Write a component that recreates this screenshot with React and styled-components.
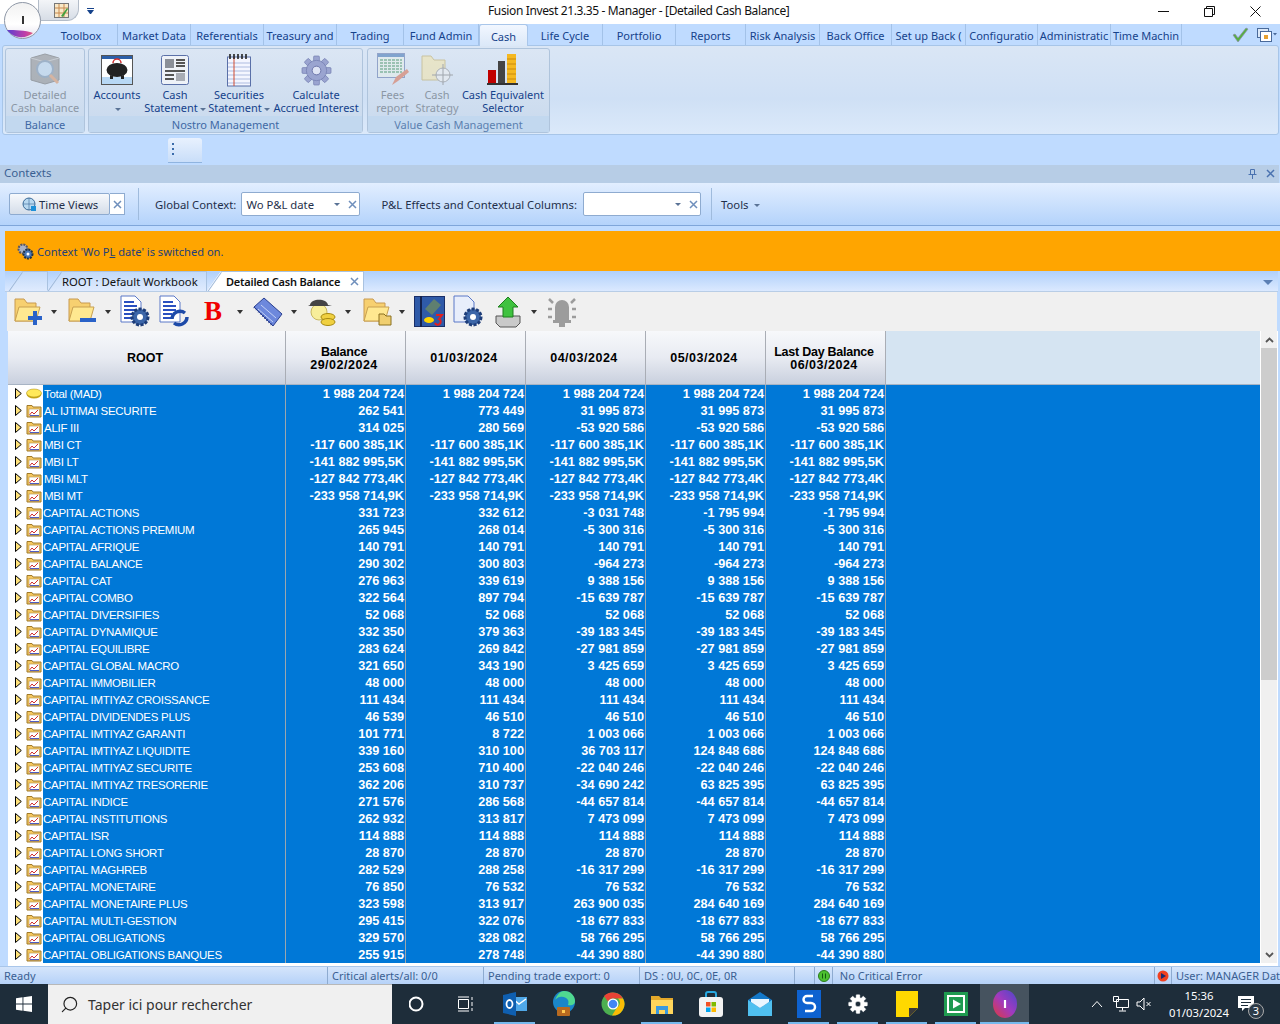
import styled, { createGlobalStyle } from 'styled-components';
import { Search } from 'lucide-react';

const GlobalStyle = createGlobalStyle`
    html, body { margin: 0; padding: 0; background: #bfdbff; }
    * { box-sizing: border-box; }
`;

const uiFont = `"Noto Sans", "DejaVu Sans", sans-serif`;
const gridFont = `"Liberation Sans", Arial, sans-serif`;

const Page = styled.div`
    position: relative;
    width: 1280px;
    height: 1024px;
    overflow: hidden;
    display: flex;
    flex-direction: column;
    background: #bfdbff;
    font-family: ${uiFont};
    font-size: 11px;
    color: #15428b;
`;

/* title bar */
const TitleBar = styled.div`
    height: 24px;
    flex: none;
    background: #fff;
    display: flex;
    align-items: center;
    color: #111;
    font-size: 12px;
    letter-spacing: -0.37px;
    padding: 0 0 3px 488px;
    white-space: nowrap;
`;
const WindowButtons = styled.div`
    position: absolute;
    top: 0;
    right: 2px;
    height: 23px;
    display: flex;
    align-items: center;
`;
const WinBtn = styled.div`
    width: 46px;
    height: 23px;
    display: flex;
    align-items: center;
    justify-content: center;
`;
const Orb = styled.div`
    position: absolute;
    left: 4px;
    top: 2px;
    width: 37px;
    height: 37px;
    z-index: 3;
`;
const QuickPill = styled.div`
    position: absolute;
    left: 38px;
    top: 0;
    width: 41px;
    height: 21px;
    border: 1px solid #b3bcc8;
    border-top: 0;
    border-radius: 0 0 12px 0;
    background: linear-gradient(to bottom, #f3f5f8, #d7dde6);
    display: flex;
    align-items: center;
    justify-content: center;
    padding-left: 6px;
`;
const QuickMenu = styled.div`
    position: absolute;
    left: 87px;
    top: 8px;
    width: 7px;
    height: 6px;
    border-top: 1px solid #15428b;
    &::after {
        content: '';
        display: block;
        margin-top: 1px;
        border: 3px solid transparent;
        border-top: 4px solid #15428b;
        border-bottom: 0;
    }
`;

/* ribbon tabs */
const TabRow = styled.div`
    height: 21px;
    flex: none;
    display: flex;
    padding-left: 45px;
    position: relative;
`;
const RibbonTab = styled.div`
    width: ${p => p.$w}px;
    height: ${p => (p.$active ? 22 : 21)}px;
    overflow: hidden;
    white-space: nowrap;
    display: flex;
    align-items: center;
    justify-content: center;
    padding-top: 1px;
    color: #15428b;
    z-index: 1;
    border-right: 1px solid ${p => (p.$active ? 'transparent' : '#a3c2e8')};
    ${p => p.$active && `
        background: linear-gradient(to bottom, #f2f7ff, #dbe8f8);
        border: 1px solid #a9c6ea;
        border-bottom: 0;
        border-radius: 3px 3px 0 0;
    `}
`;
const TabIcons = styled.div`
    position: absolute;
    right: 3px;
    top: 1px;
    height: 20px;
    display: flex;
    align-items: center;
    gap: 8px;
`;

/* ribbon */
const Ribbon = styled.div`
    height: 90px;
    flex: none;
    margin: 0 1px 0 2px;
    padding: 2px 0 1px 2px;
    background: linear-gradient(to bottom, #dae6f5, #cfe0f5 60%, #dbe9fa);
    border: 1px solid #a7c5e8;
    border-radius: 3px;
    display: flex;
    gap: 3px;
`;
const Group = styled.div`
    width: ${p => p.$w}px;
    margin-left: ${p => p.$ml || 0}px;
    border: 1px solid #afc4dc;
    border-radius: 3px;
    background: linear-gradient(to bottom, #dbe6f4, #c8d9ed);
    display: flex;
    flex-direction: column;
`;
const GroupBody = styled.div`
    flex: 1;
    display: flex;
    min-height: 0;
`;
const GroupLabel = styled.div`
    height: 16px;
    flex: none;
    background: #c2d8ef;
    text-align: center;
    line-height: 17px;
    color: ${p => (p.$off ? '#5b7faf' : '#3f69a5')};
`;
const RibbonBtn = styled.div`
    width: ${p => p.$w}px;
    flex: none;
    display: flex;
    flex-direction: column;
    align-items: center;
    padding-top: 3px;
    text-align: center;
    line-height: 13px;
    white-space: nowrap;
    color: ${p => (p.$off ? '#8b97a5' : '#15428b')};
`;
const RibbonIcon = styled.div`
    height: 36px;
    display: flex;
    align-items: center;
    justify-content: center;
    opacity: ${p => (p.$off ? 0.55 : 1)};
`;
const Caret = styled.span`
    display: inline-block;
    margin-left: ${p => p.$ml ?? 2}px;
    margin-right: ${p => p.$mr ?? 0}px;
    vertical-align: middle;
    border: 3px solid transparent;
    border-top: 3px solid #5a7396;
    border-bottom: 0;
`;

const SubBar = styled.div`
    height: 30px;
    flex: none;
    padding: 3px 0 0 168px;
`;
const SubBarHandle = styled.div`
    width: 34px;
    height: 25px;
    border-radius: 3px 3px 0 0;
    border-bottom: 1px solid #8fb4e0;
    background: linear-gradient(to bottom, #e8f1fe, #c9def9);
    padding: 5px 0 0 4px;
`;

/* contexts */
const ContextHead = styled.div`
    height: 18px;
    flex: none;
    margin-right: 1px;
    background: #b7cde6;
    display: flex;
    align-items: center;
    justify-content: space-between;
    padding: 0 4px 3px;
    color: #3a5f92;
    font-size: 11.5px;
`;
const HeadIcons = styled.div`
    display: flex;
    align-items: center;
    gap: 9px;
    margin-top: 2px;
`;
const ContextBar = styled.div`
    height: 43px;
    flex: none;
    background: linear-gradient(to bottom, #e2eeff, #b4d3fb);
    border-bottom: 1px solid #7fa6da;
    display: flex;
    align-items: center;
    padding-left: 9px;
    color: #1f2f4a;
    font-size: 11.3px;
`;
const TimeBtn = styled.div`
    width: 101px;
    height: 22px;
    border: 1px solid #8eabd0;
    border-radius: 2px;
    background: linear-gradient(to bottom, #f7f9fc, #d4dde9);
    display: flex;
    align-items: center;
    padding-left: 12px;
    gap: 2px;
`;
const CloseBox = styled.div`
    width: 15px;
    height: 22px;
    background: #fff;
    border: 1px solid #8eabd0;
    border-left: 0;
    display: flex;
    align-items: center;
    justify-content: center;
`;
const VSep = styled.div`
    width: 1px;
    height: 32px;
    background: #9fbbdd;
    margin: ${p => p.$m};
`;
const Combo = styled.div`
    width: ${p => p.$w}px;
    height: 24px;
    margin-left: ${p => p.$ml}px;
    background: #fff;
    border: 1px solid #8eabd0;
    border-radius: 2px;
    display: flex;
    align-items: center;
    padding: 0 2px 0 4px;
`;
const ComboText = styled.div`
    flex: 1;
`;
const BarLabel = styled.div`
    white-space: nowrap;
    margin-left: ${p => p.$ml || 0}px;
`;

/* content */
const Content = styled.div`
    flex: 1;
    min-height: 0;
    margin-top: 5px;
    padding: 0 0 0 5px;
    display: flex;
    flex-direction: column;
`;
const Alert = styled.div`
    height: 40px;
    flex: none;
    background: #ffa500;
    display: flex;
    align-items: center;
    padding: 0 0 0 12px;
    gap: 3px;
    color: #23407a;
    font-size: 11.1px;
`;
const DocTabs = styled.div`
    height: 21px;
    flex: none;
    margin-right: 2px;
    background: linear-gradient(to bottom, #b0d0fa, #dbe9ff);
    border-bottom: 1px solid #b8cde6;
    display: flex;
    align-items: flex-end;
    position: relative;
    padding-left: 3px;
`;
const DocTab = styled.div`
    position: relative;
    width: ${p => p.$w}px;
    height: 20px;
    padding-left: ${p => p.$pl}px;
    display: flex;
    align-items: center;
    gap: 10px;
    color: #111;
    white-space: nowrap;
    background: ${p => (p.$active ? '#fff' : 'linear-gradient(to bottom, #c3daf9, #dfebfe)')};
    border-top: 1px solid #a9c2e0;
    border-right: 1px solid #a9c2e0;
    font-weight: ${p => (p.$active ? 600 : 400)};
    font-size: ${p => (p.$active ? 11 : 11.3)}px;
    letter-spacing: ${p => (p.$active ? -0.22 : 0)}px;
    clip-path: polygon(0 100%, 14px 0, 100% 0, 100% 100%);
    margin-right: ${p => p.$mr || 0}px;
    &::before {
        content: '';
        position: absolute;
        left: 7px;
        top: -2px;
        width: 1px;
        height: 24px;
        background: #9fb9da;
        transform: rotate(35deg);
    }
`;
const TabMenu = styled.div`
    position: absolute;
    right: 5px;
    top: 9px;
    border: 5px solid transparent;
    border-top: 5px solid #5b7fb4;
    border-bottom: 0;
`;
const Toolbar = styled.div`
    height: 39px;
    flex: none;
    margin-left: 2px;
    margin-right: 3px;
    background: #f0f0f0;
    display: flex;
    align-items: center;
    padding-left: 7px;
`;
const ToolSlot = styled.div`
    width: ${p => p.$w}px;
    height: 33px;
    flex: none;
    margin-left: ${p => p.$ml || 0}px;
    display: flex;
    align-items: center;
    justify-content: center;
`;
const BoldGlyph = styled.span`
    font-family: "Liberation Serif", "Times New Roman", serif;
    font-weight: 700;
    font-size: 27px;
    line-height: 27px;
    color: #f00000;
`;
const ToolArrow = styled.div`
    width: 8px;
    flex: none;
    margin-left: ${p => p.$ml || 0}px;
    display: flex;
    justify-content: center;
    &::after {
        content: '';
        border: 3.5px solid transparent;
        border-top: 4px solid #333;
        border-bottom: 0;
    }
`;

const GridWrap = styled.div`
    flex: 1;
    min-height: 0;
    margin-left: 3px;
    margin-right: 2px;
    display: flex;
    background: #fff;
    border-bottom: 3px solid #fff;
`;
const GridMain = styled.div`
    width: 1252px;
    flex: none;
    overflow: hidden;
`;
const columns = '278px repeat(5, 120px) 1fr';
const HeadRow = styled.div`
    height: 54px;
    display: grid;
    grid-template-columns: ${columns};
    background: #d5e4f2;
    border-bottom: 1px solid #a8b4c4;
`;
const HeadCell = styled.div`
    background: linear-gradient(to bottom, #f7f8fb, #e8ebf2 50%, #c9d0de);
    border-right: 1px solid #a9adb5;
    display: flex;
    flex-direction: column;
    align-items: center;
    justify-content: center;
    text-align: center;
    padding: 2px 3px 0 0;
    font-family: ${gridFont};
    font-weight: 700;
    font-size: 12.5px;
    line-height: 13px;
    color: #000;
`;
const HeadLabel = styled.div`
    letter-spacing: -0.25px;
`;
const HeadDate = styled.div`
    letter-spacing: 0.5px;
`;
const HeadFill = styled.div`
    background: #d5e4f2;
`;
const Row = styled.div`
    height: 17px;
    display: grid;
    grid-template-columns: ${columns};
    font-family: ${gridFont};
    color: #fff;
`;
const NameCell = styled.div`
    display: flex;
    align-items: stretch;
    border-right: 1px solid #9aa6ae;
`;
const TreePart = styled.div`
    width: 35px;
    flex: none;
    background: #fff;
    display: flex;
    align-items: center;
    padding-left: 7px;
    gap: 4px;
`;
const NameText = styled.div`
    flex: 1;
    background: #0078d7;
    font-size: 11.5px;
    letter-spacing: -0.28px;
    line-height: 16px;
    padding: 1px 0 0 ${p => (p.$first ? 1 : 0)}px;
    white-space: nowrap;
    overflow: hidden;
`;
const ValueCell = styled.div`
    background: #0078d7;
    border-right: 1px solid #9aa6ae;
    text-align: right;
    line-height: 16px;
    padding: 1px 1px 0 0;
    font-weight: 700;
    font-size: 12.7px;
    white-space: nowrap;
`;
const RowFill = styled.div`
    background: #0078d7;
`;
const ScrollBar = styled.div`
    width: 16px;
    margin-left: 1px;
    flex: none;
    display: flex;
    flex-direction: column;
    background: #f0f0f0;
`;
const ScrollEnd = styled.div`
    height: 17px;
    flex: none;
    display: flex;
    align-items: center;
    justify-content: center;
`;
const ScrollThumb = styled.div`
    height: 332px;
    flex: none;
    background: #cdcdcd;
`;
const ScrollRest = styled.div`
    flex: 1;
`;

/* status bar */
const StatusBar = styled.div`
    height: 18px;
    flex: none;
    background: linear-gradient(to bottom, #d5e5fb, #b6d2f8);
    border-top: 1px solid #a9c6ea;
    display: flex;
    color: #3a5f92;
    overflow: hidden;
`;
const StatusCell = styled.div`
    width: ${p => p.$w}px;
    flex: none;
    padding-left: ${p => (p.$icon ? 0 : 4)}px;
    border-right: 1px solid #8eabd0;
    white-space: nowrap;
    line-height: 17px;
    display: flex;
    align-items: center;
    justify-content: ${p => (p.$icon ? 'center' : 'flex-start')};
    &:last-child { border-right: 0; }
`;

/* taskbar */
const Taskbar = styled.div`
    height: 40px;
    flex: none;
    background: #1e2d3a;
    display: flex;
    align-items: stretch;
    color: #fff;
`;
const StartBtn = styled.div`
    width: 48px;
    flex: none;
    display: flex;
    align-items: center;
    justify-content: center;
`;
const SearchBox = styled.div`
    width: 344px;
    flex: none;
    background: #f0f0f0;
    border-top: 1px solid #b8b8b8;
    color: #333;
    display: flex;
    align-items: center;
    padding-left: 12px;
    gap: 9px;
    font-size: 14px;
`;
const TaskIcons = styled.div`
    display: flex;
`;
const TaskItem = styled.div`
    width: 49px;
    height: 40px;
    flex: none;
    display: flex;
    align-items: center;
    justify-content: center;
    position: relative;
    background: ${p => (p.$active ? '#46535f' : 'transparent')};
    &::after {
        content: '';
        display: ${p => (p.$open ? 'block' : 'none')};
        position: absolute;
        left: ${p => (p.$active ? 0 : 4)}px;
        right: ${p => (p.$active ? 0 : 4)}px;
        bottom: 0;
        height: 2px;
        background: #76b9ed;
    }
`;
const Tray = styled.div`
    flex: 1;
    display: flex;
    align-items: center;
    padding-left: 56px;
`;
const TrayIcon = styled.div`
    width: ${p => p.$w}px;
    flex: none;
    display: flex;
    justify-content: center;
`;
const Clock = styled.div`
    width: 68px;
    margin-left: 10px;
    text-align: center;
    font-size: 11.3px;
    line-height: 17px;
`;
const Notif = styled.div`
    position: relative;
    margin-left: 4px;
    width: 26px;
    height: 24px;
`;
const NotifCount = styled.div`
    position: absolute;
    right: -1px;
    bottom: -3px;
    width: 16px;
    height: 16px;
    border-radius: 50%;
    background: #2c3a47;
    border: 1px solid #aaa;
    font-size: 11px;
    line-height: 14px;
    text-align: center;
`;

/* drawn icons */
const Expander = () => (
    <svg width="7" height="11" viewBox="0 0 7 11" style={{ flex: 'none' }}>
        <path d="M.5.5 6.300 5.500.5 10.500Z" fill="#ffe27a" stroke="#000" />
    </svg>
);
const TreeFolder = () => (
    <svg width="16" height="14" viewBox="0 0 16 14" style={{ flex: 'none' }}>
        <path d="M1 3V1.500h5L7 3h8v10H1Z" fill="#f5c860" stroke="#a07a2a" />
        <rect x="3" y="5" width="10.500" height="7" fill="#fff" stroke="#b08a40" strokeWidth=".6" />
        <path d="M3.500 11 6 8l2 2 4-4" fill="none" stroke="#d03030" />
        <path d="M4 11.600h9" stroke="#4050c0" />
    </svg>
);
const Coin = () => (
    <svg width="16" height="11" viewBox="0 0 16 11" style={{ flex: 'none' }}>
        <ellipse cx="8" cy="6" rx="7.500" ry="4.500" fill="#c8a818" />
        <ellipse cx="8" cy="5" rx="7.500" ry="4" fill="#ffe95a" stroke="#a88a10" strokeWidth=".5" />
    </svg>
);
const SmallX = ({ c = '#6f8fbc', s = 9 }) => (
    <svg width={s} height={s} viewBox="0 0 9 9" style={{ flex: 'none' }}>
        <path d="M1 1l7 7M8 1 1 8" stroke={c} strokeWidth="1.500" />
    </svg>
);
const GearShape = ({ s = 32, fill = '#9aa4d0', hole = '#dfe4f5', stroke = '#6a74a8' }) => {
    const teeth = [0, 45, 90, 135, 180, 225, 270, 315];
    return (
        <svg width={s} height={s} viewBox="0 0 32 32" style={{ flex: 'none' }}>
            {teeth.map(a => (
                <rect key={a} x="13" y="1" width="6" height="7" rx="1" fill={fill} stroke={stroke} strokeWidth=".6" transform={`rotate(${a} 16 16)`} />
            ))}
            <circle cx="16" cy="16" r="10.500" fill={fill} stroke={stroke} strokeWidth=".6" />
            <circle cx="16" cy="16" r="4.500" fill={hole} stroke={stroke} />
        </svg>
    );
};
const OrbLogo = () => (
    <svg width="37" height="37" viewBox="0 0 37 37">
        <defs>
            <linearGradient id="orbFace" x1="0" y1="0" x2="0" y2="1">
                <stop offset="0" stopColor="#f1f1f1" />
                <stop offset=".6" stopColor="#ffffff" />
                <stop offset="1" stopColor="#e6e2ee" />
            </linearGradient>
            <linearGradient id="orbBand" x1="0" y1="0" x2="1" y2="0">
                <stop offset="0" stopColor="#5a3fd0" />
                <stop offset=".7" stopColor="#c03fa8" />
                <stop offset="1" stopColor="#e05a7a" />
            </linearGradient>
        </defs>
        <circle cx="18.500" cy="18.500" r="18" fill="url(#orbFace)" stroke="#8e97a6" />
        <path d="M3 28c8 0 18 0 26 3-7 6-19 6-26-3Z" fill="url(#orbBand)" />
        <rect x="18" y="14" width="2" height="8" fill="#333" />
    </svg>
);
const SafeIcon = () => (
    <svg width="32" height="34" viewBox="0 0 32 34">
        <path d="M2 5 16 1l14 4v22l-14 4L2 27Z" fill="#8b8b8b" stroke="#666" />
        <path d="M2 5l14 4 14-4" fill="none" stroke="#bbb" />
        <circle cx="16" cy="16" r="8" fill="#b9d3ea" stroke="#6f8aa6" strokeWidth="2" />
        <path d="m21 22 8 8" stroke="#d89060" strokeWidth="3" />
    </svg>
);
const PiggyIcon = () => (
    <svg width="32" height="30" viewBox="0 0 32 30">
        <rect x=".5" y=".5" width="31" height="29" fill="#fff" stroke="#555" />
        <rect x="1" y="1" width="30" height="3" fill="#2c5fa8" />
        <path d="M1 22h30v7H1Z" fill="#b8d8f5" />
        <ellipse cx="16" cy="15" rx="10.500" ry="7" fill="#222" />
        <path d="M9 20v4h3v-3M20 21v3h3v-4" fill="#222" />
        <path d="M12 8a4 4 0 0 1 8 0" fill="none" stroke="#d03030" strokeWidth="1.500" />
    </svg>
);
const TableIcon = () => (
    <svg width="28" height="30" viewBox="0 0 28 30">
        <rect x=".5" y=".5" width="27" height="29" rx="2" fill="#eef2f8" stroke="#5a70a8" />
        <rect x="4" y="4" width="9" height="9" fill="#8a8f98" />
        <path d="M15 5h9M15 8h9M15 11h9M4 16h20M4 20h9M4 24h9" stroke="#555" strokeWidth="2" />
        <rect x="15" y="18" width="9" height="8" fill="#a9adb5" />
    </svg>
);
const NotebookIcon = () => (
    <svg width="24" height="33" viewBox="0 0 24 33">
        <rect x=".5" y="3" width="23" height="29" fill="#f4f6ff" stroke="#5a70a8" />
        <path d="M1 9h22M1 13h22M1 17h22M1 21h22M1 25h22M1 29h22" stroke="#aebce0" />
        <path d="M7 3v29" stroke="#d04a30" />
        <path d="M3 0v5M7 0v5M11 0v5M15 0v5M19 0v5" stroke="#222" strokeWidth="1.600" />
    </svg>
);
const CalendarPen = () => (
    <svg width="32" height="34" viewBox="0 0 32 34">
        <rect x=".5" y=".5" width="27" height="24" fill="#e7efe9" stroke="#5a70a8" />
        <rect x="1" y="1" width="26" height="3" fill="#3a6fb0" />
        <path d="M3 7h22M3 10h22M3 13h22M3 16h22M3 19h22" stroke="#6aa880" strokeWidth="2" strokeDasharray="3 1" />
        <path d="m15 32 4-8 11-8 2 3-11 9Z" fill="#d86a4a" />
    </svg>
);
const FolderTarget = () => (
    <svg width="32" height="30" viewBox="0 0 32 30">
        <path d="M1 5V1h9l3 4h11v20H1Z" fill="#f4e4a8" stroke="#bca860" />
        <circle cx="22" cy="20" r="7" fill="#eee" stroke="#888" />
        <path d="M22 9v22M11 20h21" stroke="#777" />
    </svg>
);
const BarsIcon = () => (
    <svg width="32" height="32" viewBox="0 0 32 32">
        <rect x="1" y="16" width="8" height="13" fill="#c00000" />
        <rect x="11" y="7" width="7" height="22" fill="#444" />
        <path d="M20 0h9v29h-9Z" fill="#f5b820" />
        <path d="M20 5h9M20 10h9M20 15h9M20 20h9M20 25h9" stroke="#c98a10" />
        <path d="M0 30h31" stroke="#333" strokeWidth="2" />
    </svg>
);
const FolderTool = ({ badge }) => (
    <svg width="30" height="32" viewBox="0 0 30 32">
        <path d="M1 7V3h9l3 4h9v18H1Z" fill="#f7d070" stroke="#c89a50" />
        <path d="M1 25 5 11h21l-4 14Z" fill="#ffe890" stroke="#c8a050" />
        {badge === 'plus' && <path d="M21 15v14M14 22h14" stroke="#2a62c8" strokeWidth="4" />}
        {badge === 'minus' && <path d="M12 24h16" stroke="#2a62c8" strokeWidth="4" />}
        {badge === 'folder' && <path d="M16 21v-3h5l2 2h5v9H16Z" fill="#f0cf70" stroke="#8a7020" />}
    </svg>
);
const DocGear = ({ refresh, pale }) => (
    <svg width="32" height="33" viewBox="0 0 32 33">
        <path d="M2 1h14l6 6v20H2Z" fill={pale ? '#e8eefb' : '#fff'} stroke="#5a78c8" />
        {!pale && <path d="M5 7h10M5 11h13M5 15h13M5 19h9M5 23h9" stroke="#2a50c0" strokeWidth="2" />}
        {refresh ? (
            <g fill="none" stroke="#1d4aa8" strokeWidth="3.500">
                <path d="M14 24a8 8 0 0 1 13-6" />
                <path d="M29 22a8 8 0 0 1-13 6" />
            </g>
        ) : (
            <g>
                <circle cx="21" cy="22" r="8" fill="#3c66a8" stroke="#1d3c78" strokeDasharray="3 1.500" strokeWidth="3" />
                <circle cx="21" cy="22" r="3" fill="#fff" />
            </g>
        )}
    </svg>
);
const BookIcon = () => (
    <svg width="30" height="30" viewBox="0 0 30 30">
        <path d="M1 10 11 1l18 16-9 12Z" fill="#6d88dc" stroke="#2a3f90" />
        <path d="m5 12 15 13M8 8l15 13" stroke="#c5d2f5" />
        <path d="m1 10 19 19" stroke="#2a3f90" strokeWidth="2" strokeDasharray="1 2" />
    </svg>
);
const ManCoins = () => (
    <svg width="30" height="32" viewBox="0 0 30 32">
        <circle cx="12" cy="16" r="8" fill="#f8ee9a" stroke="#c8b860" />
        <path d="M3 9c1-7 17-7 18 0l4 1H1Z" fill="#444" />
        <ellipse cx="21" cy="21" rx="7" ry="3.500" fill="#f0d040" stroke="#a88a10" />
        <ellipse cx="21" cy="26" rx="7" ry="3.500" fill="#f0d040" stroke="#a88a10" />
    </svg>
);
const BlueBook = () => (
    <svg width="31" height="31" viewBox="0 0 31 31">
        <rect x=".5" y=".5" width="30" height="30" fill="#2f5aa8" stroke="#1a2f68" />
        <path d="M7 0v31" stroke="#14224d" strokeWidth="2" />
        <path d="m11 13 9-10 7 6-9 10Z" fill="#5f7f70" />
        <ellipse cx="15" cy="24" rx="5" ry="3" fill="#ffd400" />
        <path d="M22 19h6l-3 4a3 3 0 1 1-4 4" fill="none" stroke="#e02020" strokeWidth="2" />
    </svg>
);
const UploadIcon = () => (
    <svg width="28" height="32" viewBox="0 0 28 32">
        <path d="M2 20h24v7l-4 4H6l-4-4Z" fill="#c9c9c9" stroke="#555" />
        <path d="M14 1 24 11h-5v10H9V11H4Z" fill="#3fc23f" stroke="#1f7f1f" />
    </svg>
);
const BellIcon = () => (
    <svg width="32" height="32" viewBox="0 0 32 32">
        <path d="M9 24V11a7 7 0 0 1 14 0v13Z" fill="#9c9c9c" />
        <rect x="7" y="24" width="18" height="3" fill="#9c9c9c" />
        <rect x="13" y="27" width="6" height="4" fill="#9c9c9c" />
        <path d="M3 3l4 4M29 3l-4 4M2 13h4M26 13h4M2 21h4M26 21h4" stroke="#9c9c9c" strokeWidth="2.500" />
    </svg>
);
const GearsSmall = () => (
    <svg width="17" height="17" viewBox="0 0 17 17">
        <circle cx="6" cy="6" r="4.500" fill="#aab2c4" stroke="#556" strokeDasharray="2 1" strokeWidth="2" />
        <circle cx="11" cy="11" r="4.500" fill="#4a78b8" stroke="#234" strokeDasharray="2 1" strokeWidth="2" />
        <circle cx="11" cy="11" r="1.500" fill="#fff" />
    </svg>
);
const ClockGlobe = () => (
    <svg width="15" height="15" viewBox="0 0 15 15">
        <circle cx="7" cy="7" r="6" fill="#b8d8f0" stroke="#3a6a98" />
        <path d="M1 7h12M7 1v12" stroke="#3a6a98" strokeWidth=".6" />
        <path d="M9 9h5v5H9Z" fill="#1e90d8" />
    </svg>
);
const Windows = () => (
    <svg width="16" height="16" viewBox="0 0 16 16" fill="#fff">
        <path d="M0 2.200 6.500 1.300V7.500H0ZM7.400 1.200 16 0v7.500H7.400ZM0 8.400h6.500v6.300L0 13.800ZM7.400 8.400H16V16l-8.600-1.200Z" />
    </svg>
);
const Outlook = () => (
    <svg width="24" height="26" viewBox="0 0 24 26">
        <path d="M9 6h15v14H9Z" fill="#50a8e8" />
        <path d="m10 8 6 5 7-5" fill="none" stroke="#fff" strokeWidth="1.500" />
        <path d="M0 4 13 1v24L0 22Z" fill="#0f5fb0" />
        <ellipse cx="6.500" cy="13" rx="3" ry="4" fill="none" stroke="#fff" strokeWidth="1.800" />
    </svg>
);
const Edge = () => (
    <svg width="26" height="28" viewBox="0 0 26 28">
        <circle cx="13" cy="12" r="11" fill="#1b86c8" />
        <path d="M13 1c7 0 11 5 11 10 0 4-4 5-7 4 2-5-2-9-8-8-2 0-4 2-5 3 2-5 5-9 9-9Z" fill="#50d890" />
        <rect x="6" y="17" width="13" height="9" rx="1" fill="#b86a20" />
        <rect x="11" y="20" width="3" height="3" fill="#ffc850" />
    </svg>
);
const Chrome = () => (
    <svg width="24" height="24" viewBox="0 0 24 24">
        <circle cx="12" cy="12" r="11.500" fill="#4caf50" />
        <path d="M12 .5A11.500 11.500 0 0 1 22 6.500H12a5.500 5.500 0 0 0-5 3L3 4A11.500 11.500 0 0 1 12 .5Z" fill="#ea4335" />
        <path d="M22 6.500A11.500 11.500 0 0 1 11 23.500l5-8a5.500 5.500 0 0 0 1-9Z" fill="#fbbc05" />
        <circle cx="12" cy="12" r="5.500" fill="#fff" />
        <circle cx="12" cy="12" r="4.300" fill="#4285f4" />
    </svg>
);
const Explorer = () => (
    <svg width="22" height="20" viewBox="0 0 22 20">
        <path d="M0 2h8l2 2h12v16H0Z" fill="#e3a82a" />
        <path d="M0 6h22v14H0Z" fill="#ffd65c" />
        <path d="M5 20v-8h12v8h-3v-4H8v4Z" fill="#3a9ae0" />
    </svg>
);
const Store = () => (
    <svg width="24" height="26" viewBox="0 0 24 26">
        <path d="M7 6V3a2 2 0 0 1 2-2h6a2 2 0 0 1 2 2v3" fill="none" stroke="#28a8e0" strokeWidth="2" />
        <rect y="6" width="24" height="20" rx="3" fill="#f2f2f2" />
        <path d="M7 11h4.500v4.500H7Z" fill="#f25022" />
        <path d="M12.500 11H17v4.500h-4.500Z" fill="#7fba00" />
        <path d="M7 16.500h4.500V21H7Z" fill="#00a4ef" />
        <path d="M12.500 16.500H17V21h-4.500Z" fill="#ffb900" />
    </svg>
);
const Mail = () => (
    <svg width="24" height="24" viewBox="0 0 24 24">
        <path d="M0 8 12 0l12 8v16H0Z" fill="#1478c8" />
        <path d="M0 8l12 8 12-8v16H0Z" fill="#50c0f0" />
        <path d="M3 7h18v3l-9 6-9-6Z" fill="#eaf6ff" />
    </svg>
);
const BlueS = () => (
    <svg width="24" height="28" viewBox="0 0 24 28">
        <rect width="24" height="28" fill="#0e62d0" />
        <path d="M16 6H10a3.500 3.500 0 0 0 0 7h4a3.500 3.500 0 0 1 0 8H8" fill="none" stroke="#fff" strokeWidth="2.500" />
    </svg>
);
const Settings = () => <GearShape s={20} fill="#fff" hole="#1e2d3a" stroke="#fff" />;
const Sticky = () => (
    <svg width="22" height="26" viewBox="0 0 22 26">
        <path d="M0 0h22v17l-9 9H0Z" fill="#ffd800" />
        <path d="M22 17h-9v9Z" fill="#3a3a3a" />
    </svg>
);
const GreenPlay = () => (
    <svg width="24" height="24" viewBox="0 0 24 24">
        <rect width="24" height="24" fill="#1f9a50" />
        <rect x="3" y="3" width="18" height="18" fill="#fff" />
        <rect x="5" y="5" width="14" height="14" fill="#1f9a50" />
        <path d="M9 7.500 17 12l-8 4.500Z" fill="#fff" />
    </svg>
);
const AppOrb = () => (
    <svg width="24" height="28" viewBox="0 0 24 28">
        <defs>
            <linearGradient id="orb" x1="0" y1="1" x2="1" y2="0">
                <stop offset="0" stopColor="#e03a3a" />
                <stop offset=".5" stopColor="#a03ac0" />
                <stop offset="1" stopColor="#4a48c8" />
            </linearGradient>
        </defs>
        <ellipse cx="12" cy="14" rx="12" ry="14" fill="url(#orb)" />
        <path d="M12 10v8" stroke="#fff" strokeWidth="2.200" />
    </svg>
);

const ribbonTabs = [
    ['Toolbox', 73], ['Market Data', 73], ['Referentials', 73], ['Treasury and', 73], ['Trading', 67],
    ['Fund Admin', 75], ['Cash', 49, true], ['Life Cycle', 75], ['Portfolio', 73], ['Reports', 70],
    ['Risk Analysis', 74], ['Back Office', 72], ['Set up Back (', 74], ['Configuratio', 72],
    ['Administratic', 73], ['Time Machin', 71],
];

const rows = [
    ['Total (MAD)', '1 988 204 724', '1 988 204 724', '1 988 204 724', '1 988 204 724', '1 988 204 724'],
    ['AL IJTIMAI SECURITE', '262 541', '773 449', '31 995 873', '31 995 873', '31 995 873'],
    ['ALIF III', '314 025', '280 569', '-53 920 586', '-53 920 586', '-53 920 586'],
    ['MBI CT', '-117 600 385,1K', '-117 600 385,1K', '-117 600 385,1K', '-117 600 385,1K', '-117 600 385,1K'],
    ['MBI LT', '-141 882 995,5K', '-141 882 995,5K', '-141 882 995,5K', '-141 882 995,5K', '-141 882 995,5K'],
    ['MBI MLT', '-127 842 773,4K', '-127 842 773,4K', '-127 842 773,4K', '-127 842 773,4K', '-127 842 773,4K'],
    ['MBI MT', '-233 958 714,9K', '-233 958 714,9K', '-233 958 714,9K', '-233 958 714,9K', '-233 958 714,9K'],
    ['CAPITAL ACTIONS', '331 723', '332 612', '-3 031 748', '-1 795 994', '-1 795 994'],
    ['CAPITAL ACTIONS PREMIUM', '265 945', '268 014', '-5 300 316', '-5 300 316', '-5 300 316'],
    ['CAPITAL AFRIQUE', '140 791', '140 791', '140 791', '140 791', '140 791'],
    ['CAPITAL BALANCE', '290 302', '300 803', '-964 273', '-964 273', '-964 273'],
    ['CAPITAL CAT', '276 963', '339 619', '9 388 156', '9 388 156', '9 388 156'],
    ['CAPITAL COMBO', '322 564', '897 794', '-15 639 787', '-15 639 787', '-15 639 787'],
    ['CAPITAL DIVERSIFIES', '52 068', '52 068', '52 068', '52 068', '52 068'],
    ['CAPITAL DYNAMIQUE', '332 350', '379 363', '-39 183 345', '-39 183 345', '-39 183 345'],
    ['CAPITAL EQUILIBRE', '283 624', '269 842', '-27 981 859', '-27 981 859', '-27 981 859'],
    ['CAPITAL GLOBAL MACRO', '321 650', '343 190', '3 425 659', '3 425 659', '3 425 659'],
    ['CAPITAL IMMOBILIER', '48 000', '48 000', '48 000', '48 000', '48 000'],
    ['CAPITAL IMTIYAZ CROISSANCE', '111 434', '111 434', '111 434', '111 434', '111 434'],
    ['CAPITAL DIVIDENDES PLUS', '46 539', '46 510', '46 510', '46 510', '46 510'],
    ['CAPITAL IMTIYAZ GARANTI', '101 771', '8 722', '1 003 066', '1 003 066', '1 003 066'],
    ['CAPITAL IMTIYAZ LIQUIDITE', '339 160', '310 100', '36 703 117', '124 848 686', '124 848 686'],
    ['CAPITAL IMTIYAZ SECURITE', '253 608', '710 400', '-22 040 246', '-22 040 246', '-22 040 246'],
    ['CAPITAL IMTIYAZ TRESORERIE', '362 206', '310 737', '-34 690 242', '63 825 395', '63 825 395'],
    ['CAPITAL INDICE', '271 576', '286 568', '-44 657 814', '-44 657 814', '-44 657 814'],
    ['CAPITAL INSTITUTIONS', '262 932', '313 817', '7 473 099', '7 473 099', '7 473 099'],
    ['CAPITAL ISR', '114 888', '114 888', '114 888', '114 888', '114 888'],
    ['CAPITAL LONG SHORT', '28 870', '28 870', '28 870', '28 870', '28 870'],
    ['CAPITAL MAGHREB', '282 529', '288 258', '-16 317 299', '-16 317 299', '-16 317 299'],
    ['CAPITAL MONETAIRE', '76 850', '76 532', '76 532', '76 532', '76 532'],
    ['CAPITAL MONETAIRE PLUS', '323 598', '313 917', '263 900 035', '284 640 169', '284 640 169'],
    ['CAPITAL MULTI-GESTION', '295 415', '322 076', '-18 677 833', '-18 677 833', '-18 677 833'],
    ['CAPITAL OBLIGATIONS', '329 570', '328 082', '58 766 295', '58 766 295', '58 766 295'],
    ['CAPITAL OBLIGATIONS BANQUES', '255 915', '278 748', '-44 390 880', '-44 390 880', '-44 390 880'],
];

const headers = [
    ['Balance', '29/02/2024'],
    [null, '01/03/2024'],
    [null, '04/03/2024'],
    [null, '05/03/2024'],
    ['Last Day Balance', '06/03/2024'],
];

const App = () => {
    return (
        <Page>
            <GlobalStyle />
            <TitleBar>Fusion Invest 21.3.35 - Manager - [Detailed Cash Balance]</TitleBar>
            <WindowButtons>
                <WinBtn>
                    <svg width="11" height="11" viewBox="0 0 11 11"><path d="M0 5.500h11" stroke="#111" /></svg>
                </WinBtn>
                <WinBtn>
                    <svg width="11" height="11" viewBox="0 0 11 11" fill="none" stroke="#111"><path d="M.5 2.500h8v8h-8ZM2.500 2.500v-2h8v8h-2" /></svg>
                </WinBtn>
                <WinBtn>
                    <svg width="11" height="11" viewBox="0 0 11 11"><path d="m.5.5 10 10M10.500.5l-10 10" stroke="#111" /></svg>
                </WinBtn>
            </WindowButtons>
            <QuickPill>
                <svg width="15" height="15" viewBox="0 0 15 15">
                    <rect x=".5" y=".5" width="14" height="14" fill="#f8e8c8" stroke="#777" />
                    <path d="M5 1v13M10 1v13M1 5h13M1 10h13" stroke="#c88a50" />
                    <path d="m7 13 6-8 1 1-5 8Z" fill="#40a040" />
                </svg>
            </QuickPill>
            <QuickMenu />
            <Orb><OrbLogo /></Orb>

            <TabRow>
                {ribbonTabs.map(([label, w, active]) => (
                    <RibbonTab key={label} $w={w} $active={active}>{label}</RibbonTab>
                ))}
                <TabIcons>
                    <svg width="17" height="16" viewBox="0 0 17 16">
                        <path d="m1 8 5 7L16 2l-2-1-8 10-3-4Z" fill="#55b040" stroke="#8a8aa8" strokeWidth=".7" />
                    </svg>
                    <svg width="20" height="15" viewBox="0 0 20 15">
                        <rect x=".5" y=".5" width="11" height="9" fill="#dbe8f8" stroke="#4a6a9a" />
                        <rect x="3.500" y="3.500" width="11" height="10" fill="#fff" stroke="#4a6a9a" />
                        <rect x="7" y="7" width="4" height="4" fill="#e8a030" />
                        <path d="m16 5 2 2.500L20 5Z" fill="#4a6a9a" />
                    </svg>
                </TabIcons>
            </TabRow>

            <Ribbon>
                <Group $w={80}>
                    <GroupBody>
                        <RibbonBtn $w={78} $off>
                            <RibbonIcon $off><SafeIcon /></RibbonIcon>
                            Detailed<br />Cash balance
                        </RibbonBtn>
                    </GroupBody>
                    <GroupLabel>Balance</GroupLabel>
                </Group>
                <Group $w={275}>
                    <GroupBody>
                        <RibbonBtn $w={56}>
                            <RibbonIcon><PiggyIcon /></RibbonIcon>
                            Accounts
                            <span><Caret /></span>
                        </RibbonBtn>
                        <RibbonBtn $w={60}>
                            <RibbonIcon><TableIcon /></RibbonIcon>
                            Cash
                            <span>Statement<Caret /></span>
                        </RibbonBtn>
                        <RibbonBtn $w={68}>
                            <RibbonIcon><NotebookIcon /></RibbonIcon>
                            Securities
                            <span>Statement<Caret /></span>
                        </RibbonBtn>
                        <RibbonBtn $w={86}>
                            <RibbonIcon><GearShape s={31} /></RibbonIcon>
                            Calculate
                            <span>Accrued Interest</span>
                        </RibbonBtn>
                    </GroupBody>
                    <GroupLabel>Nostro Management</GroupLabel>
                </Group>
                <Group $w={183} $ml={1}>
                    <GroupBody>
                        <RibbonBtn $w={49} $off>
                            <RibbonIcon $off><CalendarPen /></RibbonIcon>
                            Fees<br />report
                        </RibbonBtn>
                        <RibbonBtn $w={40} $off>
                            <RibbonIcon $off><FolderTarget /></RibbonIcon>
                            Cash<br />Strategy
                        </RibbonBtn>
                        <RibbonBtn $w={92}>
                            <RibbonIcon><BarsIcon /></RibbonIcon>
                            Cash Equivalent<br />Selector
                        </RibbonBtn>
                    </GroupBody>
                    <GroupLabel $off>Value Cash Management</GroupLabel>
                </Group>
            </Ribbon>

            <SubBar>
                <SubBarHandle>
                    <svg width="2" height="12" viewBox="0 0 2 12" fill="#3b6cab">
                        <rect y="0" width="2" height="2" />
                        <rect y="5" width="2" height="2" />
                        <rect y="10" width="2" height="2" />
                    </svg>
                </SubBarHandle>
            </SubBar>

            <ContextHead>
                Contexts
                <HeadIcons>
                    <svg width="9" height="10" viewBox="0 0 9 10"><path d="M2.500.5h4v5h-4ZM.5 5.500h8M4.500 6v4" fill="none" stroke="#4a72b0" /></svg>
                    <SmallX c="#4a72b0" />
                </HeadIcons>
            </ContextHead>
            <ContextBar>
                <TimeBtn><ClockGlobe />Time Views</TimeBtn>
                <CloseBox><SmallX /></CloseBox>
                <VSep $m="0 16px 0 13px" />
                <BarLabel>Global Context:</BarLabel>
                <Combo $w={119} $ml={5}>
                    <ComboText>Wo P&amp;L date</ComboText>
                    <Caret $mr={8} />
                    <SmallX />
                </Combo>
                <BarLabel $ml={21}>P&amp;L Effects and Contextual Columns:</BarLabel>
                <Combo $w={118} $ml={6}>
                    <ComboText />
                    <Caret $mr={8} />
                    <SmallX />
                </Combo>
                <VSep $m="0 9px 0 10px" />
                <BarLabel>Tools<Caret $ml={6} /></BarLabel>
            </ContextBar>

            <Content>
                <Alert>
                    <GearsSmall />
                    <span>Context 'Wo P<u>L</u> date' is switched on.</span>
                </Alert>
                <DocTabs>
                    <DocTab $w={40} $pl={0} $mr={-1} />
                    <DocTab $w={160} $pl={15}>ROOT : Default Workbook</DocTab>
                    <DocTab $w={157} $pl={19} $active>
                        Detailed Cash Balance
                        <SmallX />
                    </DocTab>
                    <TabMenu />
                </DocTabs>
                <Toolbar>
                    <ToolSlot $w={30}><FolderTool badge="plus" /></ToolSlot>
                    <ToolArrow $ml={6} />
                    <ToolSlot $w={30} $ml={10}><FolderTool badge="minus" /></ToolSlot>
                    <ToolArrow $ml={6} />
                    <ToolSlot $w={32} $ml={7}><DocGear /></ToolSlot>
                    <ToolSlot $w={32} $ml={7}><DocGear refresh /></ToolSlot>
                    <ToolSlot $w={20} $ml={13}><BoldGlyph>B</BoldGlyph></ToolSlot>
                    <ToolArrow $ml={13} />
                    <ToolSlot $w={30} $ml={9}><BookIcon /></ToolSlot>
                    <ToolArrow $ml={7} />
                    <ToolSlot $w={30} $ml={9}><ManCoins /></ToolSlot>
                    <ToolArrow $ml={7} />
                    <ToolSlot $w={30} $ml={11}><FolderTool badge="folder" /></ToolSlot>
                    <ToolArrow $ml={5} />
                    <ToolSlot $w={31} $ml={8}><BlueBook /></ToolSlot>
                    <ToolSlot $w={32} $ml={7}><DocGear pale /></ToolSlot>
                    <ToolSlot $w={28} $ml={10}><UploadIcon /></ToolSlot>
                    <ToolArrow $ml={8} />
                    <ToolSlot $w={32} $ml={8}><BellIcon /></ToolSlot>
                </Toolbar>
                <GridWrap>
                    <GridMain>
                        <HeadRow>
                            <HeadCell>ROOT</HeadCell>
                            {headers.map(([label, date]) => (
                                <HeadCell key={date}>
                                    {label && <HeadLabel>{label}</HeadLabel>}
                                    <HeadDate>{date}</HeadDate>
                                </HeadCell>
                            ))}
                            <HeadFill />
                        </HeadRow>
                        {rows.map(([name, ...values], i) => (
                            <Row key={name}>
                                <NameCell>
                                    <TreePart>
                                        <Expander />
                                        {i === 0 ? <Coin /> : <TreeFolder />}
                                    </TreePart>
                                    <NameText $first={i < 7}>{name}</NameText>
                                </NameCell>
                                {values.map((v, j) => <ValueCell key={j}>{v}</ValueCell>)}
                                <RowFill />
                            </Row>
                        ))}
                    </GridMain>
                    <ScrollBar>
                        <ScrollEnd>
                            <svg width="9" height="6" viewBox="0 0 9 6"><path d="m1 5 3.500-3.500L8 5" fill="none" stroke="#555" strokeWidth="1.800" /></svg>
                        </ScrollEnd>
                        <ScrollThumb />
                        <ScrollRest />
                        <ScrollEnd>
                            <svg width="9" height="6" viewBox="0 0 9 6"><path d="m1 1 3.500 3.500L8 1" fill="none" stroke="#555" strokeWidth="1.800" /></svg>
                        </ScrollEnd>
                    </ScrollBar>
                </GridWrap>
            </Content>

            <StatusBar>
                <StatusCell $w={328}>Ready</StatusCell>
                <StatusCell $w={156}>Critical alerts/all: 0/0</StatusCell>
                <StatusCell $w={156}>Pending trade export: 0</StatusCell>
                <StatusCell $w={155}>DS : 0U, 0C, 0E, 0R</StatusCell>
                <StatusCell $w={20} />
                <StatusCell $w={18} $icon>
                    <svg width="12" height="12" viewBox="0 0 12 12">
                        <circle cx="6" cy="6" r="5.500" fill="#4cc030" stroke="#2a7a1a" />
                        <path d="M4.500 3.500v5M7.500 3.500v5" stroke="#135a10" />
                    </svg>
                </StatusCell>
                <StatusCell $w={322}>&nbsp;No Critical Error</StatusCell>
                <StatusCell $w={17} $icon>
                    <svg width="12" height="12" viewBox="0 0 12 12">
                        <circle cx="6" cy="6" r="5.500" fill="#f04020" />
                        <path d="M4 3v6l5-3Z" fill="#1a2a70" />
                    </svg>
                </StatusCell>
                <StatusCell $w={108}>User: MANAGER Dat</StatusCell>
            </StatusBar>

            <Taskbar>
                <StartBtn><Windows /></StartBtn>
                <SearchBox>
                    <Search size={19} color="#222" strokeWidth={1.5} style={{ transform: 'scaleX(-1)' }} />
                    Taper ici pour rechercher
                </SearchBox>
                <TaskIcons>
                    <TaskItem>
                        <svg width="16" height="16" viewBox="0 0 16 16"><circle cx="7" cy="8" r="6.500" fill="none" stroke="#fff" strokeWidth="2" /></svg>
                    </TaskItem>
                    <TaskItem>
                        <svg width="16" height="16" viewBox="0 0 16 16" fill="none" stroke="#fff"><path d="M.5 3.500h10v9H.5ZM0 1h11M0 15h11M14 1v3M14 6v4M14 12v3" /></svg>
                    </TaskItem>
                    <TaskItem $open><Outlook /></TaskItem>
                    <TaskItem><Edge /></TaskItem>
                    <TaskItem><Chrome /></TaskItem>
                    <TaskItem $open><Explorer /></TaskItem>
                    <TaskItem><Store /></TaskItem>
                    <TaskItem><Mail /></TaskItem>
                    <TaskItem $open><BlueS /></TaskItem>
                    <TaskItem $open><Settings /></TaskItem>
                    <TaskItem $open><Sticky /></TaskItem>
                    <TaskItem $open><GreenPlay /></TaskItem>
                    <TaskItem $open $active><AppOrb /></TaskItem>
                </TaskIcons>
                <Tray>
                    <TrayIcon $w={24}>
                        <svg width="12" height="8" viewBox="0 0 12 8"><path d="m1 7 5-5.500L11 7" fill="none" stroke="#fff" /></svg>
                    </TrayIcon>
                    <TrayIcon $w={24}>
                        <svg width="16" height="16" viewBox="0 0 16 16" fill="none" stroke="#fff"><path d="M3.500 3.500h12v8h-12ZM.5.5h5v5h-5ZM9.500 11.500v3M6 15h7" /></svg>
                    </TrayIcon>
                    <TrayIcon $w={22}>
                        <svg width="16" height="14" viewBox="0 0 16 14" fill="none" stroke="#fff"><path d="M1 5h3l4-4v12L4 9H1ZM10.500 5l4 4M14.500 5l-4 4" /></svg>
                    </TrayIcon>
                    <Clock>15:36<br />01/03/2024</Clock>
                    <Notif>
                        <svg width="18" height="17" viewBox="0 0 18 17" fill="#fff" style={{ marginTop: 3 }}>
                            <path d="M1 1h16v12H8l-3 3v-3H1Z" />
                            <path d="M4 4.500h10M4 7.500h10M4 10.500h7" stroke="#1e2d3a" />
                        </svg>
                        <NotifCount>3</NotifCount>
                    </Notif>
                </Tray>
            </Taskbar>
        </Page>
    );
}

export default App;
